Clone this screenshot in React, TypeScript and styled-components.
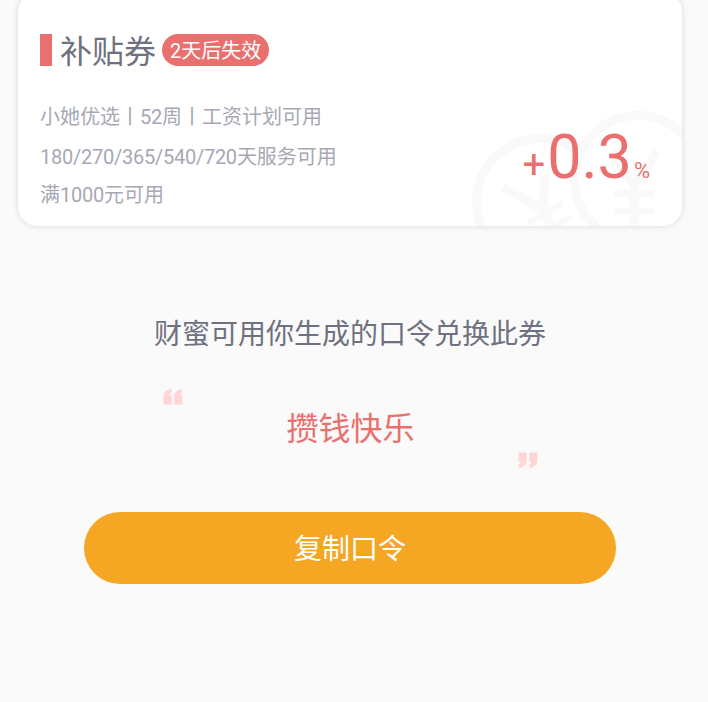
import React from "react";
import styled, { createGlobalStyle } from "styled-components";

const GlobalStyle = createGlobalStyle`
  * { box-sizing: border-box; }
  html, body { margin: 0; padding: 0; background: #fafafa; }
  body { overflow: hidden; font-family: Roboto, "Noto Sans CJK SC", sans-serif; }
  p, h1, h2 { margin: 0; font-weight: 400; }
`;

const Page = styled.main`
  width: 708px;
  height: 702px;
  overflow: hidden;
  background: #fafafa;
  display: flex;
  flex-direction: column;
`;

const Card = styled.section`
  position: relative;
  flex: none;
  width: 664px;
  height: 234px;
  margin: -8px 0 0 18px;
  padding: 42px 32px 0 22px;
  border-radius: 20px;
  background: #fff;
  box-shadow: 0 0 6px rgba(0, 0, 0, 0.14);
  overflow: hidden;
`;

const Watermark = styled.svg`
  position: absolute;
  right: 0;
  bottom: 0;
  width: 214px;
  height: 122px;
`;

const CardHeader = styled.header`
  display: flex;
  align-items: center;
  height: 32px;
`;

const Accent = styled.span`
  width: 12px;
  height: 32px;
  background: #ea706f;
`;

const CardTitle = styled.h1`
  margin-left: 8px;
  padding-top: 4px;
  font-size: 32px;
  line-height: 32px;
  color: #6f7180;
`;

const Badge = styled.span`
  margin-left: 6px;
  width: 107px;
  height: 32px;
  border-radius: 16px;
  background: #ea706f;
  color: #fff;
  font-size: 20px;
  line-height: 34px;
  text-align: center;
  white-space: nowrap;
`;

const CardBody = styled.div`
  position: relative;
  display: flex;
  justify-content: space-between;
  margin-top: 32px;
`;

const Terms = styled.div`
  display: grid;
  grid-template-rows: 40px 38px 38px;
  font-size: 20px;
  line-height: 38px;
  color: #a7a8b4;
  white-space: nowrap;
`;

const Digits = styled.span`
  letter-spacing: -0.25px;
`;

const Rate = styled.div`
  display: flex;
  align-items: baseline;
  height: 80px;
  margin-top: 19px;
  color: #ea706f;
  line-height: 80px;
`;

const RatePart = styled.span<{ $size: number; $gap?: number }>`
  font-size: ${({ $size }) => $size}px;
  margin-left: ${({ $gap = 0 }) => $gap}px;
`;

const Share = styled.section`
  width: 700px;
  display: flex;
  flex-direction: column;
  align-items: center;
  padding-top: 88px;
`;

const Hint = styled.h2`
  font-size: 28px;
  line-height: 42px;
  color: #6f7180;
`;

const Quote = styled.div`
  display: flex;
  justify-content: space-between;
  width: 376px;
  height: 79px;
  margin: 33px 0 0 1px;
`;

const Passphrase = styled.p`
  align-self: center;
  font-size: 32px;
  line-height: 48px;
  color: #ea706f;
`;

const QuoteMark = styled.svg<{ $end?: boolean }>`
  width: 20px;
  height: 16px;
  fill: #ffd5d5;
  align-self: ${({ $end }) => ($end ? "flex-end" : "flex-start")};
  transform: ${({ $end }) => ($end ? "rotate(180deg)" : "none")};
`;

const CopyButton = styled.button`
  width: 532px;
  height: 72px;
  margin-top: 44px;
  padding: 4px 0 0;
  border: 0;
  border-radius: 36px;
  background: #f5a623;
  color: #fff;
  font: inherit;
  font-size: 28px;
  line-height: 68px;
`;

const quotePath =
  "M.5 15.500V8.500C.5 4 3 .5 8.500 0V3.600C7 4.200 6.500 5.400 7 6L8.800 6.500V15.500Z M11.200 15.500V8.500C11.200 4 13.700 .5 19.200 0V3.600C17.700 4.200 17.200 5.400 17.700 6L19.500 6.500V15.500Z";

function QuoteIcon({ end }: { end?: boolean }) {
  return (
    <QuoteMark $end={end} viewBox="0 0 20 16" aria-hidden="true">
      <path d={quotePath} />
    </QuoteMark>
  );
}

function CoinsWatermark() {
  return (
    <Watermark viewBox="468 104 214 122" fill="none" stroke="#f9f9f9" strokeWidth="9" aria-hidden="true">
      <circle cx="540" cy="202" r="63.5" />
      <path d="M503 187L543 210L545 175M543 210L556 236" />
      <path d="M528 223L563 203M536 237L571 217" strokeWidth="6.500" />
      <circle cx="638" cy="179" r="63.5" fill="#fff" />
      <path d="M611 151L634 186L657 151M634 184V240" />
      <path d="M614 193.500H654M614 211H654" strokeWidth="6.500" />
    </Watermark>
  );
}

export default function App() {
  return (
    <>
      <GlobalStyle />
      <Page>
        <Card>
          <CoinsWatermark />
          <CardHeader>
            <Accent />
            <CardTitle>补贴券</CardTitle>
            <Badge>2天后失效</Badge>
          </CardHeader>
          <CardBody>
            <Terms>
              <p>小她优选丨<Digits>52</Digits>周丨工资计划可用</p>
              <p><Digits>180/270/365/540/720</Digits>天服务可用</p>
              <p>满<Digits>1000</Digits>元可用</p>
            </Terms>
            <Rate>
              <RatePart $size={40}>+</RatePart>
              <RatePart $size={61} $gap={2}>0.3</RatePart>
              <RatePart $size={22} $gap={2}>%</RatePart>
            </Rate>
          </CardBody>
        </Card>
        <Share>
          <Hint>财蜜可用你生成的口令兑换此券</Hint>
          <Quote>
            <QuoteIcon />
            <Passphrase>攒钱快乐</Passphrase>
            <QuoteIcon end />
          </Quote>
          <CopyButton type="button">复制口令</CopyButton>
        </Share>
      </Page>
    </>
  );
}
